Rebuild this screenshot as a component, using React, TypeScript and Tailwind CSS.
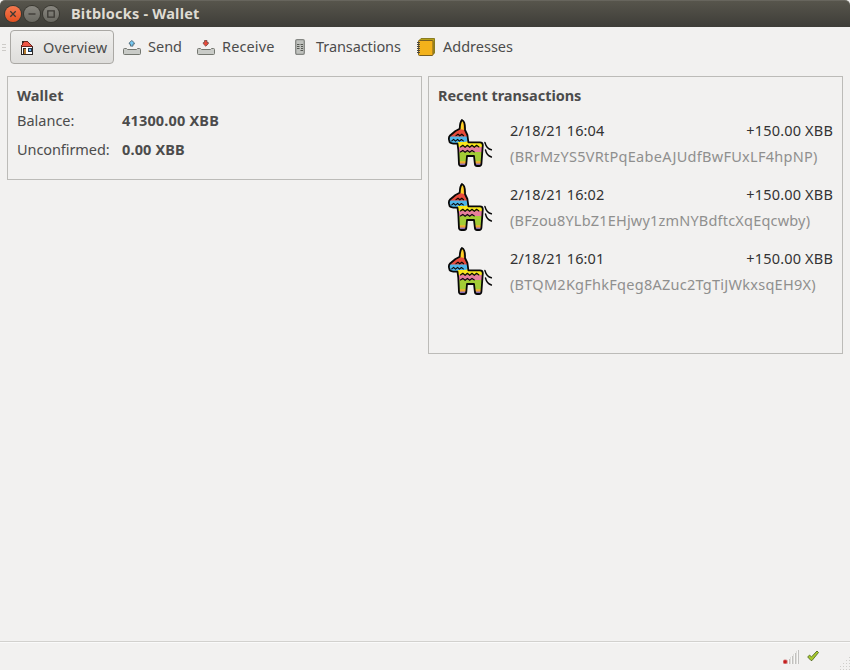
import type { ReactNode } from "react";

const transactions = [
  { date: "2/18/21 16:04", address: "(BRrMzYS5VRtPqEabeAJUdfBwFUxLF4hpNP)", tracking: "tracking-[0.28px]" },
  { date: "2/18/21 16:02", address: "(BFzou8YLbZ1EHjwy1zmNYBdftcXqEqcwby)", tracking: "tracking-[0.19px]" },
  { date: "2/18/21 16:01", address: "(BTQM2KgFhkFqeg8AZuc2TgTiJWkxsqEH9X)", tracking: "tracking-[0.26px]" },
];

const bodyOutline =
  "M16 1C14 3 13.8 7 13.7 9.8L9.5 12L3.8 16.8Q2.6 18 3 20.5L3.6 23Q5 25 11.5 24.6L12.3 31L13 45.5Q13.2 47 15 47H18Q20 47 20.3 45L21 37H28L28.9 45Q29.2 47 31 47H33.2Q35.2 47 35.4 45L36.8 26Q36.6 23.4 34 23.4H22.4L21.4 16L19 11C19.2 6 18.4 2 16 1Z";

function Pinata() {
  return (
    <svg className="h-12 w-12 shrink-0" viewBox="0 0 48 48">
      <defs>
        <clipPath id="pinata-body">
          <path d={bodyOutline} />
        </clipPath>
      </defs>
      <g clipPath="url(#pinata-body)">
        <path fill="#fbd32a" d="M0 0H48V48H0Z" />
        <path fill="#f4a51c" d="M17.2 0H20V10H17.2Z" />
        <path fill="#e74b3c" d="M0 11L13 10L22 11.5V18H0Z" />
        <path fill="#4db5e9" d="M0 17.6H22V22L19 23H12L10 26H0Z" />
        <path fill="#f8e71c" d="M12 23H38V28H12Z" />
        <path fill="#e77f9d" d="M10 28H38V33H10Z" />
        <path fill="#a3cc36" d="M10 33H38V42.5H10Z" />
        <path fill="#f0a332" d="M10 42.5H38V44.5H10Z" />
        <path fill="#8967b0" d="M10 44.5H38V48H10Z" />
      </g>
      <g fill="none" stroke="#080808" strokeLinejoin="round" strokeLinecap="round">
        <path strokeWidth="1.8" d={bodyOutline} />
        <path strokeWidth="1.15" d="m10 16.6 2-1.4 1.8 1.6 2-1.6 1.8 1.5M5.8 21.9l1.8-1.5 1.9 1.7 2.1-1.7 1.8 1.7 2-1.6 1.9 1.4M14.5 28l2.3-1.7 2.3 2 2.3-2 2.3 2 2.3-2 2.3 2 2.3-2 2.3 1.7M14.5 33l2.3-1.6 2.3 1.9 2.3-1.9 2.3 1.9 2.3-1.9 2.3 1.6" />
        <path strokeWidth="1.4" d="M38.9 23.5Q40.7 30 45.4 30.8M39.5 31Q40.7 36.5 45.4 38" />
      </g>
    </svg>
  );
}

function HomeIcon() {
  return (
    <svg className="mt-px h-4 w-4" viewBox="0 0 16 16" shapeRendering="crispEdges">
      <path fill="#302b29" d="M2 7H14V15H2ZM3 1H6V5H3Z" />
      <path fill="#fff" d="M3 7H13V14H3Z" />
      <path fill="#6b2620" d="M5 1H9V2H10V3H11V4H12V5H13V6H14V7H2V5H3V3H4V2H5Z" />
      <path fill="#ee5545" d="M5 2H9V3H10V4H11V5H12V6H3V5H4V3H5Z" />
      <path fill="#302b29" d="M4 8H7V15H4Z" />
      <path fill="#b57a2d" d="M5 9H7V14H5Z" />
      <path fill="#24364a" d="M9 8H13V12H9Z" />
      <path fill="#6bb4ed" d="M10 9H12V11H10Z" />
    </svg>
  );
}

function TrayIcon({ receive = false }: { receive?: boolean }) {
  return (
    <svg className="mt-px h-4 w-[18px]" viewBox="0 0 18 16">
      <path fill="#c9cbc7" stroke="#747770" d="M.5 9.5Q.5 8.5 1.5 8.5H3.5L4.5 9.5H13.5L14.5 8.5H16.5Q17.5 8.5 17.5 9.5V13.5Q17.5 14.5 16.5 14.5H1.5Q.5 14.5.5 13.5Z" />
      {receive ? (
        <path fill="#e9493a" stroke="#80504b" strokeWidth=".9" d="M7.5.5H10V2.5H11.3V3.8L8.8 6.2 6.3 3.8V2.5H7.5Z" />
      ) : (
        <path fill="#75c7f0" stroke="#4e6775" strokeWidth=".9" d="M8.8.5 11.3 2.8V4.1H10V6.1H7.5V4.1H6.3V2.8Z" />
      )}
    </svg>
  );
}

function LedgerIcon() {
  return (
    <svg className="h-4 w-[10px]" viewBox="0 0 10 16">
      <rect x=".7" y=".7" width="8.6" height="14.6" rx="1.3" fill="#bfc1bd" stroke="#858783" strokeWidth="1.3" />
      <path stroke="#555752" fill="none" d="M2 5.5H4.5M5.5 5.5H8M2 7.5H4.5M6 7.5H8M2 9.5H4.5M6 9.5H8M5.5 11.5H8" />
    </svg>
  );
}

function BookIcon() {
  return (
    <svg className="-mt-px -ml-px h-[18px] w-5" viewBox="0 0 20 18">
      <path fill="#b4a019" stroke="#8b7c20" d="M5 .5H18.5V15L17 16.5H3V2.5Z" />
      <rect x="2.5" y="2.5" width="14.5" height="15" rx="1" fill="#f3b21b" stroke="#785e21" />
      <path stroke="#4d493f" d="M1 4.5H4M1 6.5H4M1 8.5H4M1 10.5H4M1 12.5H4M1 14.5H4" />
    </svg>
  );
}

function WindowButton({ close = false, children }: { close?: boolean; children: ReactNode }) {
  return (
    <button
      className={`flex h-4 w-4 items-center justify-center rounded-full ${
        close ? "bg-linear-to-b from-[#f4784e] to-[#e4501f] ring-1 ring-[#393831]" : "bg-linear-to-b from-[#88867f] to-[#6a6962] ring-1 ring-[#393831]"
      }`}
    >
      <svg className="h-4 w-4" viewBox="0 0 16 16" fill="none" stroke="#3b3934" strokeWidth="1.3">
        {children}
      </svg>
    </button>
  );
}

export default function App() {
  return (
    <div className="flex h-[670px] w-[850px] flex-col overflow-hidden bg-[#f2f1f0] font-['Noto_Sans','Open_Sans',sans-serif] text-[14.5px] leading-5 text-[#4c4c4c]">
      <header className="flex h-[27px] shrink-0 items-center gap-[3px] rounded-t-[5px] border-t border-[#67655d] bg-linear-to-b from-[#57554c] to-[#3e3d38] pl-[5px]">
        <WindowButton close><path d="m5.3 5.3 5.4 5.4m0-5.4-5.4 5.4" /></WindowButton>
        <WindowButton><path d="M4.5 8H11.5" /></WindowButton>
        <WindowButton><path d="M4.8 4.8H11.2V11.2H4.8Z" /></WindowButton>
        <h1 className="ml-[9px] pb-[2px] text-[14.5px] font-bold tracking-[0.21px] whitespace-nowrap text-[#dfdbd2]">Bitblocks - Wallet</h1>
      </header>

      <nav className="flex h-10 shrink-0 items-center whitespace-nowrap">
        <div className="mr-1 ml-[2px] flex w-1 flex-col gap-[2px]">
          <i className="h-px bg-[#cdcbc8]" /><i className="h-px bg-[#cdcbc8]" /><i className="h-px bg-[#cdcbc8]" />
        </div>
        <button className="flex h-[34px] w-[104px] items-center rounded-[4px] border border-[#aaa8a4] bg-linear-to-b from-[#f0efed] to-[#dedddb] pl-[8px]">
          <HomeIcon /><span className="ml-[8px] tracking-[0.13px]">Overview</span>
        </button>
        <button className="ml-[9px] flex w-[74px] items-center"><TrayIcon /><span className="ml-[7px] pb-[2px]">Send</span></button>
        <button className="flex w-[98px] items-center"><TrayIcon receive /><span className="ml-[7px] pb-[2px] tracking-[0.12px]">Receive</span></button>
        <button className="flex w-[122px] items-center"><LedgerIcon /><span className="ml-[11px] pb-[2px] tracking-[-0.08px]">Transactions</span></button>
        <button className="flex items-center"><BookIcon /><span className="ml-[7px] pb-[2px]">Addresses</span></button>
      </nav>

      <main className="flex min-h-0 flex-1 items-start gap-[6px] px-[7px] pt-[9px]">
        <section className="h-[104px] w-[415px] border border-[#bcbbb8] px-[9px] pt-2">
          <h2 className="font-bold tracking-[0.1px]">Wallet</h2>
          <dl className="mt-[5px] grid grid-cols-[105px_1fr] gap-y-[9px]">
            <dt>Balance:</dt><dd className="font-bold tracking-[0.17px]">41300.00 XBB</dd>
            <dt className="tracking-[-0.08px]">Unconfirmed:</dt><dd className="font-bold tracking-[0.14px]">0.00 XBB</dd>
          </dl>
        </section>
        <section className="h-[278px] w-[415px] border border-[#bcbbb8] px-[9px] pt-2">
          <h2 className="font-bold tracking-[-0.05px]">Recent transactions</h2>
          <ul className="mt-[14px] flex flex-col gap-4">
            {transactions.map((tx) => (
              <li key={tx.date} className="flex h-12 pl-2">
                <Pinata />
                <div className="ml-4 flex-1 pt-px whitespace-nowrap">
                  <div className="flex justify-between text-[#333]">
                    <span className="tracking-[0.1px]">{tx.date}</span>
                    <span className="tracking-[0.18px]">+150.00 XBB</span>
                  </div>
                  <p className="mt-[6px] text-[#8f8f8e]"><span className={tx.tracking}>{tx.address}</span></p>
                </div>
              </li>
            ))}
          </ul>
        </section>
      </main>

      <footer className="flex h-[29px] shrink-0 items-start border-t border-[#d2d1ce] pl-[783px] shadow-[inset_0_1px_0_#fafafa]">
        <svg className="mt-[7px] h-4 w-4" viewBox="0 0 16 16">
          <path fill="#f8f8f7" d="M4 11H6V15H4ZM7 8H9V15H7ZM10 5H12V15H10ZM13 2H15V15H13Z" />
          <path stroke="#c2c1bf" d="M6.5 10V15M9.5 7V15M12.5 4V15M15.5 1V15" />
          <path stroke="#deddda" d="M4.5 11V15M7.5 8V15M10.5 5V15M13.5 2V15" />
          <rect y="10.5" width="4.5" height="4.5" rx="1.5" fill="#d98080" />
          <rect x=".7" y="11.2" width="3" height="3" rx="1" fill="#c41f1f" />
        </svg>
        <svg className="mt-2 ml-2 h-3 w-3" viewBox="0 0 12 12">
          <path fill="#a9cc2a" stroke="#5f7530" strokeLinejoin="round" d="m.7 7 1.8-1.9 2 1.8L10 1l1.5 1.5L5 10.5H4Z" />
        </svg>
        <svg className="mt-[14px] ml-[20px] h-[14px] w-[11px]" viewBox="0 0 11 14">
          <path stroke="#cfcecb" strokeDasharray="1 2" d="M10 1.5H11M7 4.5H11M4 7.5H11M1 10.5H11M1 13.5H11" />
        </svg>
      </footer>
    </div>
  );
}
